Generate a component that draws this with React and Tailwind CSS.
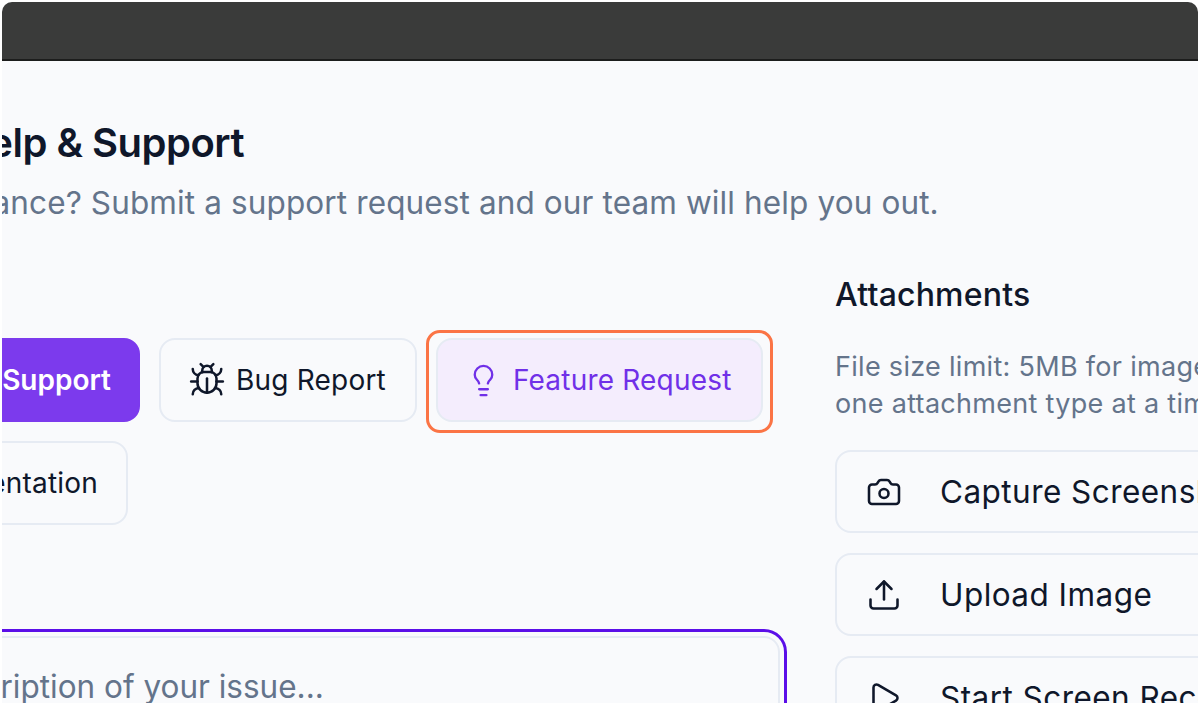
import React from "react";
import { Bug, Lightbulb, Camera, Upload, Play, Headphones, FileText } from "lucide-react";

function TypeButton({ icon: Icon, label, className = "", iconClass = "", children }) {
  return (
    <button className={`relative flex h-[84px] shrink-0 items-center gap-[12px] rounded-[16px] border-2 text-[28px] whitespace-nowrap ${className}`}>
      <Icon className={`h-[35px] w-[35px] shrink-0 ${iconClass}`} strokeWidth={1.6} />
      <span>{label}</span>
      {children}
    </button>
  );
}

function AttachButton({ icon: Icon, label }) {
  return (
    <button className="flex h-[83px] w-[480px] shrink-0 items-center gap-[38px] rounded-[16px] border-2 border-[#e6ebf3] pl-[29px] text-[31.5px] tracking-[0.45px] text-[#0f172a]">
      <Icon className="h-[36px] w-[36px] shrink-0" strokeWidth={1.7} />
      <span className="whitespace-nowrap">{label}</span>
    </button>
  );
}

export default function App() {
  return (
    <div className="h-[703px] w-[1200px] overflow-hidden bg-white px-[2px] pt-[2px] font-['Inter',sans-serif]">
      <div className="h-[701px] overflow-hidden rounded-t-[10px] bg-[#f9fafc]">
        <div className="h-[59px] border-b-2 border-b-[#1c1d1c] bg-[#3a3b3a]" />
        <div className="ml-[-42px] pt-[59px]">
          <h1 className="h-[46px] text-[40px] leading-[46px] font-semibold tracking-[-0.5px] whitespace-nowrap text-[#0f172a]">Help &amp; Support</h1>
          <p className="mt-[18px] ml-[-37px] h-[38px] text-[31.5px] leading-[38px] tracking-[0.12px] whitespace-nowrap text-[#64748b]">Guidance? Submit a support request and our team will help you out.</p>
          <div className="mt-[54px] flex gap-[55px]">
            <div className="w-[820px] shrink-0 pt-[62px]">
              <div className="flex flex-wrap gap-x-[19px] gap-y-[19px]">
                <TypeButton icon={Headphones} label="Technical Support" className="w-[180px] justify-end border-[#7c3aed] bg-[#7c3aed] pr-[27px] font-semibold text-white" />
                <TypeButton icon={Bug} label="Bug Report" iconClass="-mx-[1.5px] !h-[38px] !w-[38px]" className="border-[#e6ebf3] pr-[29px] pl-[28px] tracking-[0.2px] text-[#0f172a]" />
                <TypeButton icon={Lightbulb} label="Feature Request" iconClass="text-[#7030e8]" className="border-[#e6ebf3] bg-[#f4edfd] pr-[29px] pl-[28px] tracking-[0.2px] text-[#7030e8]">
                  <span className="absolute -top-[10px] -right-[12px] -bottom-[13px] -left-[12px] rounded-[14px] border-[3px] border-[#fb7445]" />
                </TypeButton>
                <TypeButton icon={FileText} label="Documentation" className="w-[168px] justify-end border-[#e6ebf3] pr-[28px] tracking-[0.2px] text-[#0f172a]" />
              </div>
              <div className="mt-[111px] h-[200px] rounded-[16px] border-2 border-[#e6ebf3] px-[34px] pt-[25px] text-[31.5px] whitespace-nowrap text-[#64748b] outline-[3px] outline-offset-[4px] outline-[#5b0ee8]">
                <span className="ml-[-226px]">A detailed description of your issue...</span>
              </div>
            </div>
            <div className="flex w-[480px] shrink-0 flex-col">
              <h2 className="text-[32px] leading-[38px] font-medium tracking-[0.2px] whitespace-nowrap text-[#0f172a]">Attachments</h2>
              <p className="mt-[34px] text-[27px] leading-[37px] tracking-[0.3px] whitespace-nowrap text-[#64748b]">
                File size limit: 5MB for images, 50MB for videos.<br />one attachment type at a time.
              </p>
              <div className="mt-[28px] flex flex-col gap-[20px]">
                <AttachButton icon={Camera} label="Capture Screenshot" />
                <AttachButton icon={Upload} label="Upload Image" />
                <AttachButton icon={Play} label="Start Screen Recording" />
              </div>
            </div>
          </div>
        </div>
      </div>
    </div>
  );
}
